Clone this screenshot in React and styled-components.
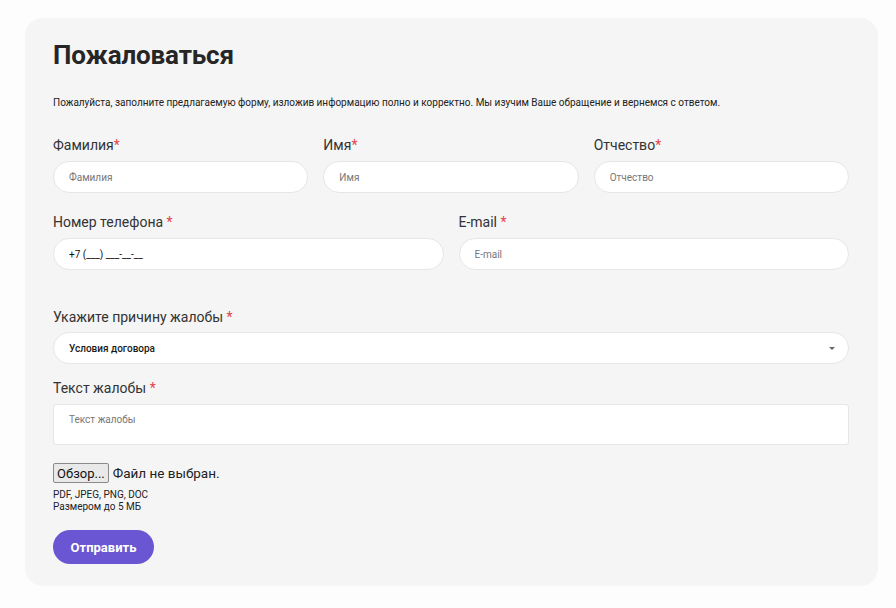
import React from "react";
import styled, { createGlobalStyle } from "styled-components";

const GlobalStyle = createGlobalStyle`
  body {
    margin: 0;
    background: #fdfdfd;
    font-family: Roboto, "Liberation Sans", Arial, sans-serif;
  }
`;

const Card = styled.form`
  box-sizing: border-box;
  width: 853px;
  margin: 18px 0 0 25px;
  padding: 22px 29px 22px 28px;
  background: #f5f5f5;
  border-radius: 18px;
`;

const Title = styled.h1`
  margin: 0;
  font-size: 26px;
  line-height: 30px;
  font-weight: 700;
  color: #262626;
  letter-spacing: -0.15px;
`;

const Lead = styled.p`
  margin: 27px 0 0;
  font-size: 10px;
  line-height: 12px;
  color: #222;
`;

const Row = styled.div`
  display: grid;
  grid-template-columns: repeat(${(p) => p.cols}, 1fr);
  column-gap: 15px;
  margin-top: ${(p) => p.top}px;
`;

const Field = styled.div`
  display: flex;
  flex-direction: column;
  gap: ${(p) => p.gap || 8}px;
  margin-top: ${(p) => p.top || 0}px;
`;

const Label = styled.label`
  font-size: 14px;
  line-height: 16px;
  color: #333;
`;

const Star = styled.span`
  color: #e5424d;
`;

const Input = styled.input`
  box-sizing: border-box;
  height: 32px;
  width: 100%;
  padding: 0 15px;
  border: 1px solid #e6e6e6;
  border-radius: 16px;
  background: #fff;
  font-family: inherit;
  font-size: 10px;
  color: #111;
  outline: none;
  &::placeholder {
    color: #777;
  }
`;

const SelectBox = styled.div`
  position: relative;
  box-sizing: border-box;
  height: 32px;
  display: flex;
  align-items: center;
  padding: 0 15px;
  border: 1px solid #e6e6e6;
  border-radius: 16px;
  background: #fff;
  font-size: 10px;
  font-weight: 500;
  color: #1a1a1a;
`;

const Caret = styled.span`
  position: absolute;
  right: 13px;
  top: 14px;
  width: 0;
  height: 0;
  border-left: 3.5px solid transparent;
  border-right: 3.5px solid transparent;
  border-top: 3.5px solid #666;
`;

const TextArea = styled.textarea`
  box-sizing: border-box;
  height: 41px;
  width: 100%;
  padding: 9px 15px;
  border: 1px solid #e6e6e6;
  border-radius: 3px;
  background: #fff;
  font-family: inherit;
  font-size: 10px;
  resize: none;
  outline: none;
  &::placeholder {
    color: #777;
  }
`;

const FileRow = styled.div`
  display: flex;
  align-items: center;
  gap: 4px;
  margin-top: 18px;
  height: 20px;
`;

const BrowseButton = styled.button`
  box-sizing: border-box;
  height: 20px;
  padding: 0 3px;
  border: 1px solid #8a8a8a;
  border-radius: 2px;
  background: #e9e9e9;
  font-family: inherit;
  font-size: 13px;
  color: #111;
`;

const FileName = styled.span`
  font-size: 13.5px;
  color: #222;
`;

const Hint = styled.div`
  margin-top: 6px;
  font-size: 10px;
  line-height: 12px;
  color: #222;
`;

const Submit = styled.button`
  margin-top: 17px;
  height: 34px;
  width: 101px;
  border: none;
  border-radius: 17px;
  background: #6a55d2;
  color: #fff;
  font-family: inherit;
  font-size: 13px;
  font-weight: 700;
`;

const Req = ({ children, gap }) => (
  <Label>
    {children}
    {gap ? " " : ""}
    <Star>*</Star>
  </Label>
);

export default function App() {
  return (
    <>
      <GlobalStyle />
      <Card onSubmit={(e) => e.preventDefault()}>
        <Title>Пожаловаться</Title>
        <Lead>
          Пожалуйста, заполните предлагаемую форму, изложив информацию полно и
          корректно. Мы изучим Ваше обращение и вернемся с ответом.
        </Lead>

        <Row cols={3} top={28}>
          <Field>
            <Req>Фамилия</Req>
            <Input placeholder="Фамилия" />
          </Field>
          <Field>
            <Req>Имя</Req>
            <Input placeholder="Имя" />
          </Field>
          <Field>
            <Req>Отчество</Req>
            <Input placeholder="Отчество" />
          </Field>
        </Row>

        <Row cols={2} top={21}>
          <Field>
            <Req gap>Номер телефона</Req>
            <Input defaultValue="+7 (___) ___-__-__" />
          </Field>
          <Field>
            <Req gap>E-mail</Req>
            <Input placeholder="E-mail" />
          </Field>
        </Row>

        <Field top={39} gap={7}>
          <Req gap>Укажите причину жалобы</Req>
          <SelectBox>
            Условия договора
            <Caret />
          </SelectBox>
        </Field>

        <Field top={16} gap={8}>
          <Req gap>Текст жалобы</Req>
          <TextArea placeholder="Текст жалобы" />
        </Field>

        <FileRow>
          <BrowseButton type="button">Обзор...</BrowseButton>
          <FileName>Файл не выбран.</FileName>
        </FileRow>
        <Hint>
          PDF, JPEG, PNG, DOC
          <br />
          Размером до 5 МБ
        </Hint>

        <Submit type="submit">Отправить</Submit>
      </Card>
    </>
  );
}
